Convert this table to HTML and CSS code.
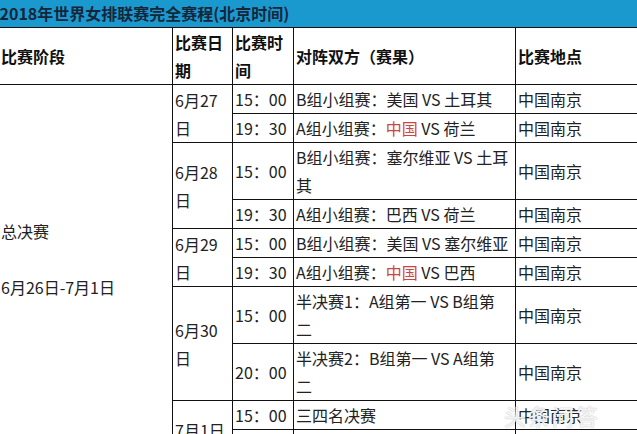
FILE: index.html
```html
<!DOCTYPE html>
<html lang="zh">
<head>
<meta charset="utf-8">
<link rel="stylesheet" href="styles.css">
</head>
<body>
<div class="page">
<table class="schedule">
<colgroup><col class="c-stage"><col class="c-date"><col class="c-time"><col class="c-match"><col class="c-venue"></colgroup>
<tr><td colspan="5" class="title">2018年世界女排联赛完全赛程(北京时间)</td></tr>
<tr class="head"><th>比赛阶段</th><th>比赛日<br>期</th><th>比赛时<br>间</th><th>对阵双方（赛果）</th><th>比赛地点</th></tr>
<tr><td rowspan="10" class="stage">总决赛<br><br>6月26日-7月1日</td><td rowspan="2">6月27<br>日</td><td>15：00</td><td>B组小组赛：美国 VS 土耳其</td><td>中国南京</td></tr>
<tr><td>19：30</td><td>A组小组赛：<span class="cn">中国</span> VS 荷兰</td><td>中国南京</td></tr>
<tr><td rowspan="2">6月28<br>日</td><td>15：00</td><td>B组小组赛：塞尔维亚 VS 土耳<br>其</td><td>中国南京</td></tr>
<tr><td>19：30</td><td>A组小组赛：巴西 VS 荷兰</td><td>中国南京</td></tr>
<tr><td rowspan="2">6月29<br>日</td><td>15：00</td><td>B组小组赛：美国 VS 塞尔维亚</td><td>中国南京</td></tr>
<tr><td>19：30</td><td>A组小组赛：<span class="cn">中国</span> VS 巴西</td><td>中国南京</td></tr>
<tr><td rowspan="2">6月30<br>日</td><td>15：00</td><td>半决赛1：A组第一 VS B组第<br>二</td><td>中国南京</td></tr>
<tr><td>20：00</td><td>半决赛2：B组第一 VS A组第<br>二</td><td>中国南京</td></tr>
<tr><td rowspan="2">7月1日</td><td>15：00</td><td>三四名决赛</td><td>中国南京</td></tr>
<tr><td>19：30</td><td>决赛</td><td>中国南京</td></tr>
</table>
<div class="watermark">头条问答</div>
</div>
</body>
</html>
```
FILE: styles.css
```css
html, body {
  margin: 0;
  padding: 0;
  background: #fff;
  overflow: hidden;
}
.page {
  position: relative;
  width: 637px;
  height: 434px;
  overflow: hidden;
}
.schedule {
  border-collapse: collapse;
  table-layout: fixed;
  width: 657px;
  margin-left: -2px;
  font-family: "Noto Sans CJK SC", "Noto Sans", sans-serif;
  font-size: 16px;
  line-height: 28px;
  color: #222;
}
.c-stage { width: 174px; }
.c-date { width: 60px; }
.c-time { width: 61px; }
.c-match { width: 222px; }
.c-venue { width: 140px; }
.schedule td, .schedule th {
  border: 1px solid #111;
  padding: 0 1px 0 2px;
  vertical-align: middle;
  text-align: left;
  white-space: nowrap;
  overflow: hidden;
}
.schedule th {
  font-weight: bold;
  color: #111;
}
.schedule td.title {
  background: #1a99cf;
  color: #15263a;
  font-weight: bold;
  height: 27px;
  line-height: 27px;
  padding: 0 0 0 1px;
  border-top: none;
  border-left: none;
  border-right: none;
}
.schedule td.stage {
  vertical-align: top;
  padding-top: 132px;
}
.cn {
  color: #d04444;
}
.watermark {
  position: absolute;
  left: 504px;
  top: 402px;
  font-family: "Noto Sans CJK SC", sans-serif;
  font-size: 22px;
  line-height: 26px;
  color: rgba(255, 255, 255, 0.9);
  text-shadow: 0 0 1px rgba(150, 150, 150, 0.6), 0 0 2px rgba(160, 160, 160, 0.4);
  letter-spacing: 2px;
}
```
